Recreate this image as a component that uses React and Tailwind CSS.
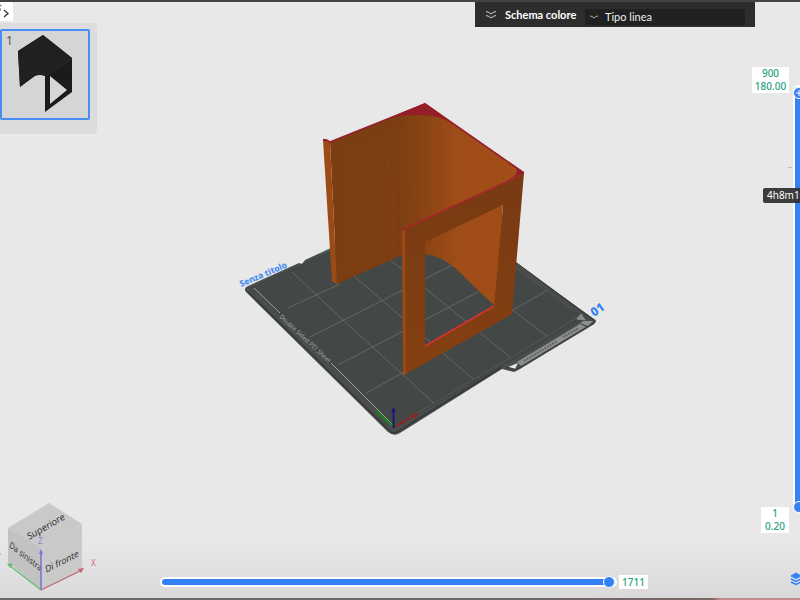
import React, { useState } from 'react';

const gridLines = [
  'M292 272L344 321L434 403',
  'M354 276L473 379',
  'M389 259L510 357',
  'M430 248L547 336',
  'M288 308L340 284',
  'M310 337L462 260',
  'M338 365L478 292',
  'M365 394L548 290',
];

const Scene = () => (
  <svg viewBox="0 0 800 600" className="absolute inset-0 h-full w-full" role="img" aria-label="Anteprima">
    <defs>
      <linearGradient id="inner" x1="330" y1="0" x2="524" y2="0" gradientUnits="userSpaceOnUse">
        <stop offset="0" stopColor="#7b3d12" />
        <stop offset="0.35" stopColor="#7c3d12" />
        <stop offset="0.5" stopColor="#8c4415" />
        <stop offset="0.65" stopColor="#9f4c18" />
        <stop offset="1" stopColor="#a44e18" />
      </linearGradient>
      <linearGradient id="front" x1="0" y1="180" x2="0" y2="370" gradientUnits="userSpaceOnUse">
        <stop offset="0" stopColor="#783a13" />
        <stop offset="1" stopColor="#853f12" />
      </linearGradient>
      <pattern id="layers" width="4" height="3" patternUnits="userSpaceOnUse">
        <path d="M0 1L3 0" stroke="#95501f" strokeWidth="0.6" opacity="0.5" />
      </pattern>
    </defs>

    {/* build plate */}
    <path d="M248 286L299 263L302 264L305 260L430 202L594 319Q598 321 594 324L520 369L514 372L502 369L400 433Q394 437 388 432L246 292Q243 288 248 286Z" fill="#4a4d4d" />
    <path d="M251 287L430 205L586 318L395 428Z" fill="#434746" />
    <path d="M248 292L391 432Q394 434 399 431L502 367" fill="none" stroke="#373a3a" strokeWidth="1.5" />
    <path d="M515 262L595 321" stroke="#373a3a" strokeWidth="1.5" />
    <path d="M320 254L330 250" stroke="#477064" strokeWidth="1" />
    <g fill="none" stroke="#6b6e6d" strokeWidth="0.8">
      {gridLines.map((d) => (
        <path key={d} d={d} />
      ))}
      <path d="M397 425L434 403L547 336L578 317M516 268L574 311" opacity="0.5" />
    </g>
    <path d="M254 288L280 313M331 363L395 427" stroke="#a1a4a3" strokeWidth="1" />
    <text transform="translate(279 317) rotate(43)" fontSize="6.200" fill="#a0a3a2" fontFamily="Noto Sans, sans-serif">
      Double Sided PEI Sheet
    </text>

    {/* front label tab */}
    <path d="M517 362L580 324L588 328L522 367Z" fill="#8c8f8e" />
    <path d="M508 367L518 363L515 369Z" fill="#e8e8e8" />
    <path d="M506 367L516 370L594 323" fill="none" stroke="#3d403f" strokeWidth="1.5" />
    <path d="M577 319L581 314L585 320Z" fill="#858887" stroke="#a0a2a1" strokeWidth="0.7" />
    <path d="M584 321L593 321L588 326L580 323Z" fill="#8c8f8e" />
    <path d="M524 361L557 341M563 337L579 328" stroke="#626665" strokeWidth="2" strokeDasharray="2 1" />
    <text transform="translate(241 287) rotate(-23)" fontSize="8.500" fontWeight="800" fill="#468df2" fontFamily="Noto Sans, sans-serif">
      Senza titolo
    </text>
    <text transform="translate(594 317) rotate(-34)" fontSize="12" fontWeight="800" fill="#347ff5" fontFamily="Noto Sans, sans-serif">
      01
    </text>

    {/* printed part */}
    <path d="M330 142L425 104L524 173L502 205V310L493 304C477 290 465 277 455 268Q443 257 425 254L402 255L337 284Z" fill="url(#inner)" />
    <path d="M345 151L403 128V253L350 277Z" fill="url(#layers)" opacity="0.35" />
    <path d="M387 154v20M403 147v18M430 149v18M414 187v13" stroke="#8d532b" strokeWidth="2" strokeDasharray="1 2" opacity="0.4" />
    <path d="M392 180V254" stroke="#965421" strokeWidth="8" strokeDasharray="1 2" opacity="0.2" />
    <path d="M323 140L330 142L337 284L332 281Z" fill="#9d4b14" />
    <path d="M323 140L326 140L330 142L425 104L524 173" fill="none" stroke="#96202a" strokeWidth="1.8" />
    <path d="M394 116L425 103L455 125Q440 115 420 115Q406 115 394 117Z" fill="#941f28" />
    <path d="M510 179Q520 174 515 166L524 173L516 180Z" fill="#96202a" />
    <path fillRule="evenodd" d="M402 230L524 173L512 314L404 375ZM425 242V346L494 306L503 205Z" fill="url(#front)" />
    <path d="M402 230L405 231L406 374L403 375Z" fill="#9b4a15" />
    <path d="M494 306L503 205L497 209L493 303Z" fill="#a04c16" />
    <path d="M402 230L519 176" stroke="#a5262a" strokeWidth="1.5" />
    <path d="M425 346L494 306" stroke="#d13236" strokeWidth="2" />

    {/* origin axes */}
    <path d="M394 427L376 411" stroke="#15851b" strokeWidth="2" />
    <path d="M394 427L417 414" stroke="#9c1d1d" strokeWidth="1.5" />
    <path d="M419 413L413 414L415 418Z" fill="#9c1d1d" />
    <path d="M393.500 428V410" stroke="#15157e" strokeWidth="1.8" />
    <path d="M393.500 407L391 412H396Z" fill="#15157e" />
  </svg>
);

const PlateThumb = () => (
  <svg viewBox="2 1 86 87" className="h-full w-full" aria-hidden="true">
    <path d="M18 21L43 5L72 28V62L45 82V46Q40 44 35 46L20 57Z" fill="#1b1b1b" />
    <path d="M18 21L43 5L72 28L45 46Q38 43 32 47L20 57Z" fill="#202020" />
    <path d="M50 46L67 60L50 74Z" fill="#d7d7d7" />
    <path d="M45 46L72 29" stroke="#333" strokeWidth="0.7" />
  </svg>
);

const ViewCube = () => (
  <svg viewBox="0 0 100 96" className="h-24 w-[100px]" role="img" aria-label="Orientamento">
    <path d="M8 32L49 7L82 28L41 51Z" fill="#c9c9c9" />
    <path d="M8 32L41 51V94L8 66Z" fill="#c2c2c2" />
    <path d="M41 51L82 28V74L41 94Z" fill="#cacaca" />
    <g fill="#333" fontFamily="Noto Sans, sans-serif">
      <text transform="translate(29 44) rotate(-30) skewX(-6)" fontSize="9.200">Superiore</text>
      <text transform="translate(9 51) rotate(38) skewX(20)" fontSize="8">Da sinistra</text>
      <text transform="translate(46 77) rotate(-27) skewX(-18)" fontSize="9">Di fronte</text>
    </g>
    <path d="M41 94L9 69" stroke="#62bd70" strokeWidth="1.3" />
    <path d="M7 67L13 68L10 72Z" fill="#62bd70" />
    <path d="M41 94L82 74" stroke="#c4616c" strokeWidth="1.3" />
    <path d="M84 72L78 73L81 77Z" fill="#c4616c" />
    <path d="M41 94V56" stroke="#7673cf" strokeWidth="1.5" />
    <path d="M41 53L39 58H43Z" fill="#7673cf" />
    <text x="38" y="48" fontSize="8" fill="#8a88d2" fontFamily="Noto Sans, sans-serif">Z</text>
    <text x="91" y="70" fontSize="8" fill="#cf6d76" fontFamily="Noto Sans, sans-serif">X</text>
    <path d="M0 57v2" stroke="#62bd70" />
  </svg>
);

const verticalRange =
  "absolute top-0 left-0 h-full w-3 cursor-pointer appearance-none [writing-mode:vertical-lr] [direction:rtl] [&::-webkit-slider-thumb]:h-3 [&::-webkit-slider-thumb]:w-3 [&::-webkit-slider-thumb]:appearance-none [&::-webkit-slider-thumb]:rounded-full [&::-webkit-slider-thumb]:border [&::-webkit-slider-thumb]:border-white [&::-webkit-slider-thumb]:bg-[#3480f7]";

const App = () => {
  const [move, setMove] = useState(1711);
  const [top, setTop] = useState(900);
  const [bottom, setBottom] = useState(1);

  return (
    <main className="relative flex h-screen flex-col overflow-hidden bg-linear-to-b from-[#e8e8e8] from-90% to-[#d9d9d9] font-['Noto_Sans',sans-serif]">
      <div className="h-0.5 shrink-0 bg-[#444346]" />
      <Scene />

      <div className="relative flex min-h-0 flex-1">
        {/* plates and view cube */}
        <aside className="flex w-[100px] shrink-0 flex-col justify-between pb-1.5">
          <div>
            <button type="button" aria-label="Espandi" className="block h-[19px] w-[13px] bg-white">
              <svg viewBox="0 0 13 19" className="h-[19px] w-[13px]" fill="none" stroke="#333" strokeWidth="1.3">
                <path d="M4 8L8 11.500L4 15" />
                <path d="M0 3.500H1.500M0 6V9" stroke="#777" />
              </svg>
            </button>
            <div className="mt-0.5 h-[111px] w-[97px] rounded-r-sm bg-[#dcdcdc] pt-1.5">
              <button type="button" aria-label="Piatto 1" className="relative block h-[91px] w-[90px] rounded-xs border-2 border-[#468df5] bg-[#d5d5d5]">
                <span className="absolute top-0.5 left-1 text-[12px] leading-4 text-[#555]">1</span>
                <PlateThumb />
              </button>
            </div>
          </div>
          <ViewCube />
        </aside>

        <section className="flex min-w-0 flex-1 flex-col items-end justify-between">
          <div className="-mr-[5px] flex h-[25px] w-[280px] items-center bg-[#2d2d2d] px-2.5 font-['Lato',sans-serif] text-white">
            <button type="button" aria-label="Comprimi" className="mr-2 shrink-0">
              <svg viewBox="0 0 12 12" className="h-3 w-3" fill="none" stroke="#d5d5d5" strokeWidth="1">
                <path d="M1 2.500Q4 3 6 5Q8 3 11 2.500M1 6.500Q4 7 6 9Q8 7 11 6.500" />
              </svg>
            </button>
            <label htmlFor="scheme" className="w-20 shrink-0 text-[11px] leading-4 font-bold whitespace-nowrap">
              Schema colore
            </label>
            <div className="relative mt-1 h-4 flex-1 bg-[#212121]">
              <svg viewBox="0 0 10 6" className="pointer-events-none absolute top-1.5 left-1 h-1.5 w-2.5" fill="none" stroke="#a5a5a5" strokeWidth="1">
                <path d="M1 1Q3 1 5 3Q7 1 9 1" />
              </svg>
              <select id="scheme" className="block h-4 w-full appearance-none pl-5 text-[11px] leading-4 text-[#eee]">
                <option>Tipo linea</option>
              </select>
            </div>
          </div>

          <div className="mb-[9px] flex w-full items-center justify-end gap-0.5 pr-[102px] pl-[60px]">
            <input
              type="range"
              aria-label="Movimento"
              min="0"
              max="1711"
              value={move}
              onChange={(e) => setMove(Number(e.target.value))}
              className="h-2.5 min-w-0 flex-1 cursor-pointer appearance-none rounded-full border-2 border-white bg-[#3480f7] [&::-webkit-slider-thumb]:h-3 [&::-webkit-slider-thumb]:w-3 [&::-webkit-slider-thumb]:appearance-none [&::-webkit-slider-thumb]:rounded-full [&::-webkit-slider-thumb]:border [&::-webkit-slider-thumb]:border-white [&::-webkit-slider-thumb]:bg-[#3480f7]"
            />
            <output className="w-[29px] bg-white text-center text-[10px] leading-[14px] font-medium text-[#2aa17f]">{move}</output>
          </div>
        </section>

        {/* layer slider */}
        <aside className="relative flex w-[50px] shrink-0 flex-col pt-[65px]">
          <div className="flex h-[466px]">
            <div className="flex w-[39px] flex-col items-end justify-between text-center text-[10px] leading-[13px] font-medium text-[#2aa17f]">
              <output className="w-[37px] bg-white">
                {top}
                <br />
                {(top * 0.2).toFixed(2)}
              </output>
              <output className="w-7 bg-white">
                {bottom}
                <br />
                {(bottom * 0.2).toFixed(2)}
              </output>
            </div>
            <div className="relative mt-[18px] mb-5 ml-1">
              <input
                type="range"
                aria-label="Strato superiore"
                min="1"
                max="900"
                value={top}
                onChange={(e) => setTop(Number(e.target.value))}
                className={`${verticalRange} rounded-full border-2 border-white bg-[#3480f7]`}
              />
              <input
                type="range"
                aria-label="Strato inferiore"
                min="1"
                max="900"
                value={bottom}
                onChange={(e) => setBottom(Number(e.target.value))}
                className={`${verticalRange} bg-transparent`}
              />
              <svg viewBox="0 0 8 8" className="pointer-events-none absolute top-1 left-0.5 h-2 w-2" stroke="#fff" strokeWidth="1">
                <path d="M1 4H7M4 1V7" />
              </svg>
            </div>
          </div>
          <span className="absolute top-[165px] left-[38px] h-px w-1 bg-[#bbb]" />
          <span className="absolute top-[186px] left-[13px] rounded-xs bg-[#333]/95 px-1 text-[10px] leading-[15px] whitespace-nowrap text-white">
            4h8m10
          </span>
          <button type="button" aria-label="Strati" className="mt-[39px] ml-[40px] w-3">
            <svg viewBox="0 0 12 14" className="h-3.5 w-3" fill="#3480f7" stroke="#3480f7">
              <path d="M6 1L11 4L6 6.500L1 4Z" />
              <path d="M1 7L6 9.500L11 7M1 10L6 12.500L11 10" fill="none" strokeWidth="1.5" />
            </svg>
          </button>
        </aside>
      </div>
      <div className="relative h-0.5 shrink-0 bg-linear-to-r from-[#6b6968] from-60% via-[#7a6865] via-89% to-[#c08d8b] to-90%" />
    </main>
  );
};

export default App;
